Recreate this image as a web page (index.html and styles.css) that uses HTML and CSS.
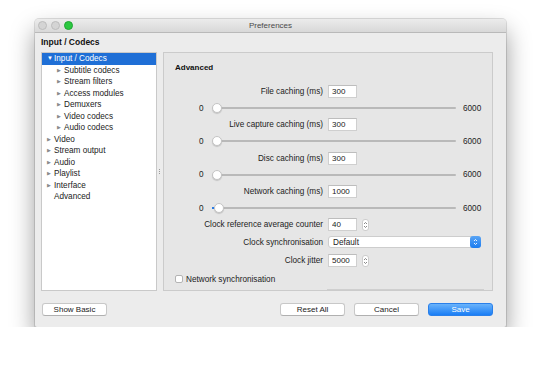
FILE: index.html
```html
<!DOCTYPE html>
<html>
<head>
	<title>Preferences</title>
	<link rel="stylesheet" href="styles.css">
</head>
<body>
	<div class="window">
		<div class="titlebar">
			<div class="lights">
				<span class="light"></span>
				<span class="light"></span>
				<span class="light green"></span>
			</div>
			<span class="title">Preferences</span>
		</div>
		<div class="content">
			<h1 class="heading">Input / Codecs</h1>
			<div class="main">
				<ul class="tree">
					<li class="sel"><span class="arrow down">▼</span>Input / Codecs</li>
					<li class="child"><span class="arrow">▶</span>Subtitle codecs</li>
					<li class="child"><span class="arrow">▶</span>Stream filters</li>
					<li class="child"><span class="arrow">▶</span>Access modules</li>
					<li class="child"><span class="arrow">▶</span>Demuxers</li>
					<li class="child"><span class="arrow">▶</span>Video codecs</li>
					<li class="child"><span class="arrow">▶</span>Audio codecs</li>
					<li><span class="arrow">▶</span>Video</li>
					<li><span class="arrow">▶</span>Stream output</li>
					<li><span class="arrow">▶</span>Audio</li>
					<li><span class="arrow">▶</span>Playlist</li>
					<li><span class="arrow">▶</span>Interface</li>
					<li><span class="arrow"></span>Advanced</li>
				</ul>
				<div class="splitter"><span class="grip"></span></div>
				<div class="panel">
					<h2 class="panel-title">Advanced</h2>

					<div class="row"><label>File caching (ms)</label><input class="num" type="text" value="300"></div>
					<div class="slider-row"><span class="min">0</span><div class="track"><span class="knob" style="left:0px"></span></div><span class="max">6000</span></div>

					<div class="row"><label>Live capture caching (ms)</label><input class="num" type="text" value="300"></div>
					<div class="slider-row"><span class="min">0</span><div class="track"><span class="knob" style="left:0px"></span></div><span class="max">6000</span></div>

					<div class="row"><label>Disc caching (ms)</label><input class="num" type="text" value="300"></div>
					<div class="slider-row"><span class="min">0</span><div class="track"><span class="knob" style="left:0px"></span></div><span class="max">6000</span></div>

					<div class="row"><label>Network caching (ms)</label><input class="num" type="text" value="1000"></div>
					<div class="slider-row"><span class="min">0</span><div class="track"><span class="fill" style="width:4px"></span><span class="knob" style="left:2px"></span></div><span class="max">6000</span></div>

					<div class="row"><label>Clock reference average counter</label><input class="num" type="text" value="40">
						<span class="stepper"><svg width="5" height="8" viewBox="0 0 5 8"><path d="M1 3 L2.5 1.5 L4 3 M1 5 L2.5 6.5 L4 5" fill="none" stroke="#6a6a6a" stroke-width="0.8"/></svg></span></div>
					<div class="row tall"><label>Clock synchronisation</label><div class="select"><span>Default</span>
						<span class="select-btn"><svg width="5" height="8" viewBox="0 0 5 8"><path d="M1 3 L2.5 1.5 L4 3 M1 5 L2.5 6.5 L4 5" fill="none" stroke="white" stroke-width="0.9"/></svg></span></div></div>
					<div class="row tall"><label>Clock jitter</label><input class="num" type="text" value="5000">
						<span class="stepper"><svg width="5" height="8" viewBox="0 0 5 8"><path d="M1 3 L2.5 1.5 L4 3 M1 5 L2.5 6.5 L4 5" fill="none" stroke="#6a6a6a" stroke-width="0.8"/></svg></span></div>
					<div class="check-row"><span class="checkbox"></span>Network synchronisation</div>
					<div class="clipped"></div>
				</div>
			</div>
			<div class="footer">
				<button class="btn">Show Basic</button>
				<div class="actions">
					<button class="btn">Reset All</button>
					<button class="btn">Cancel</button>
					<button class="btn primary">Save</button>
				</div>
			</div>
		</div>
	</div>
</body>
</html>
```

FILE: styles.css
```css
body{
	margin:0;
	padding:0;
	background-color: white;
	font-family: "Liberation Sans", Arial, sans-serif;
	font-size:8.2px;
	color:#222;
}
.window{
	margin:19px 0 0 35px;
	width:471px;
	background-color:#ececec;
	border-radius:4px 4px 2px 2px;
	box-shadow:0 12px 24px rgba(0,0,0,0.4), 0 0 0 1px rgba(0,0,0,0.12);
}
.titlebar{
	position:relative;
	height:13px;
	border-radius:4px 4px 0 0;
	background:linear-gradient(#ececec,#d8d8d8);
	border-bottom:1px solid #b9b9b9;
	text-align:center;
}
.title{
	line-height:13px;
	font-size:8px;
	color:#4a4a4a;
}
.lights{
	position:absolute;
	left:3px;
	top:2px;
	display:flex;
	gap:4px;
}
.light{
	width:7px;
	height:7px;
	border-radius:50%;
	background-color:#d4d4d4;
	border:0.5px solid #bcbcbc;
}
.light.green{
	background-color:#2bc840;
	border-color:#1fa532;
}
.content{
	padding:4px 13px 11px 6px;
}
.heading{
	margin:0 0 5px 0;
	font-size:8.5px;
	line-height:10px;
	font-weight:bold;
	color:#111;
}
.main{
	display:flex;
	height:239px;
}
.tree{
	margin:0;
	padding:0;
	width:116px;
	background-color:white;
	border:1px solid #c9c9c9;
	box-sizing:border-box;
	list-style:none;
}
.tree li{
	height:11.5px;
	line-height:11.5px;
	padding-left:5px;
	white-space:nowrap;
}
.tree li.child{
	padding-left:15px;
}
.tree li.sel{
	background-color:#1f6fd6;
	color:white;
}
.arrow{
	display:inline-block;
	width:7px;
	font-size:5px;
	color:#8a8a8a;
	vertical-align:top;
}
.arrow.down{
	color:white;
	font-size:6px;
}
.splitter{
	width:6px;
	display:flex;
	align-items:center;
	justify-content:center;
}
.grip{
	width:2px;
	height:5px;
	border-left:1px dotted #9a9a9a;
	margin-left:1px;
}
.panel{
	width:330px;
	background-color:#e6e6e6;
	border:1px solid #cbcbcb;
	box-sizing:border-box;
	padding:10px 0 0 0;
	overflow:hidden;
}
.panel-title{
	margin:0 0 10px 11px;
	font-size:8px;
	line-height:10px;
	font-weight:bold;
	color:#111;
}
.row{
	display:flex;
	align-items:center;
	height:16.7px;
}
.row.tall{
	height:18.5px;
}
.row label{
	width:159px;
	text-align:right;
	padding-right:5px;
	white-space:nowrap;
}
.num{
	width:29px;
	height:13px;
	box-sizing:border-box;
	border:1px solid #cfcfcf;
	border-top-color:#bdbdbd;
	background-color:white;
	font-family:inherit;
	font-size:8px;
	padding:0 0 0 3px;
	color:#222;
}
.stepper{
	display:flex;
	align-items:center;
	justify-content:center;
	margin-left:5px;
	width:7px;
	height:12px;
	border:1px solid #cdcdcd;
	border-radius:3px;
	background-color:white;
	box-sizing:border-box;
}
.select{
	display:flex;
	align-items:center;
	justify-content:space-between;
	width:153px;
	height:12px;
	box-sizing:border-box;
	border:1px solid #cdcdcd;
	border-radius:3px;
	background-color:white;
	padding-left:4px;
}
.select-btn{
	display:flex;
	align-items:center;
	justify-content:center;
	width:11px;
	height:12px;
	margin-right:-1px;
	border-radius:3px;
	background:linear-gradient(#5aa5f5,#1b7cf0);
}
.slider-row{
	display:flex;
	align-items:center;
	height:16.7px;
	padding-left:35px;
}
.min{
	width:13px;
}
.track{
	position:relative;
	width:244px;
	height:2px;
	background-color:#b9b9b9;
	border-radius:1px;
}
.fill{
	position:absolute;
	left:0;
	top:0;
	height:2px;
	background-color:#2a7de6;
}
.knob{
	position:absolute;
	top:-4px;
	width:10px;
	height:10px;
	box-sizing:border-box;
	border-radius:50%;
	background-color:white;
	border:1px solid #c4c4c4;
	box-shadow:0 1px 1px rgba(0,0,0,0.15);
}
.max{
	margin-left:7px;
}
.check-row{
	display:flex;
	align-items:center;
	height:18px;
	padding-left:11px;
}
.checkbox{
	width:8px;
	height:8px;
	box-sizing:border-box;
	border:1px solid #b4b4b4;
	border-radius:2px;
	background-color:white;
	margin-right:3px;
}
.clipped{
	margin:1px 0 0 163px;
	width:155px;
	height:10px;
	border:1px solid #cfcfcf;
	background-color:#ededed;
}
.footer{
	display:flex;
	justify-content:space-between;
	margin-top:12px;
	padding-left:1px;
}
.actions{
	display:flex;
	gap:9px;
}
.btn{
	width:65px;
	height:13px;
	padding:0;
	font-family:inherit;
	font-size:8px;
	color:#222;
	background-color:white;
	border:1px solid #c8c8c8;
	border-bottom-color:#b0b0b0;
	border-radius:3px;
}
.btn.primary{
	color:white;
	border-color:#2a80ea;
	background:linear-gradient(#6ab3fb,#1a7ef5);
}
```
